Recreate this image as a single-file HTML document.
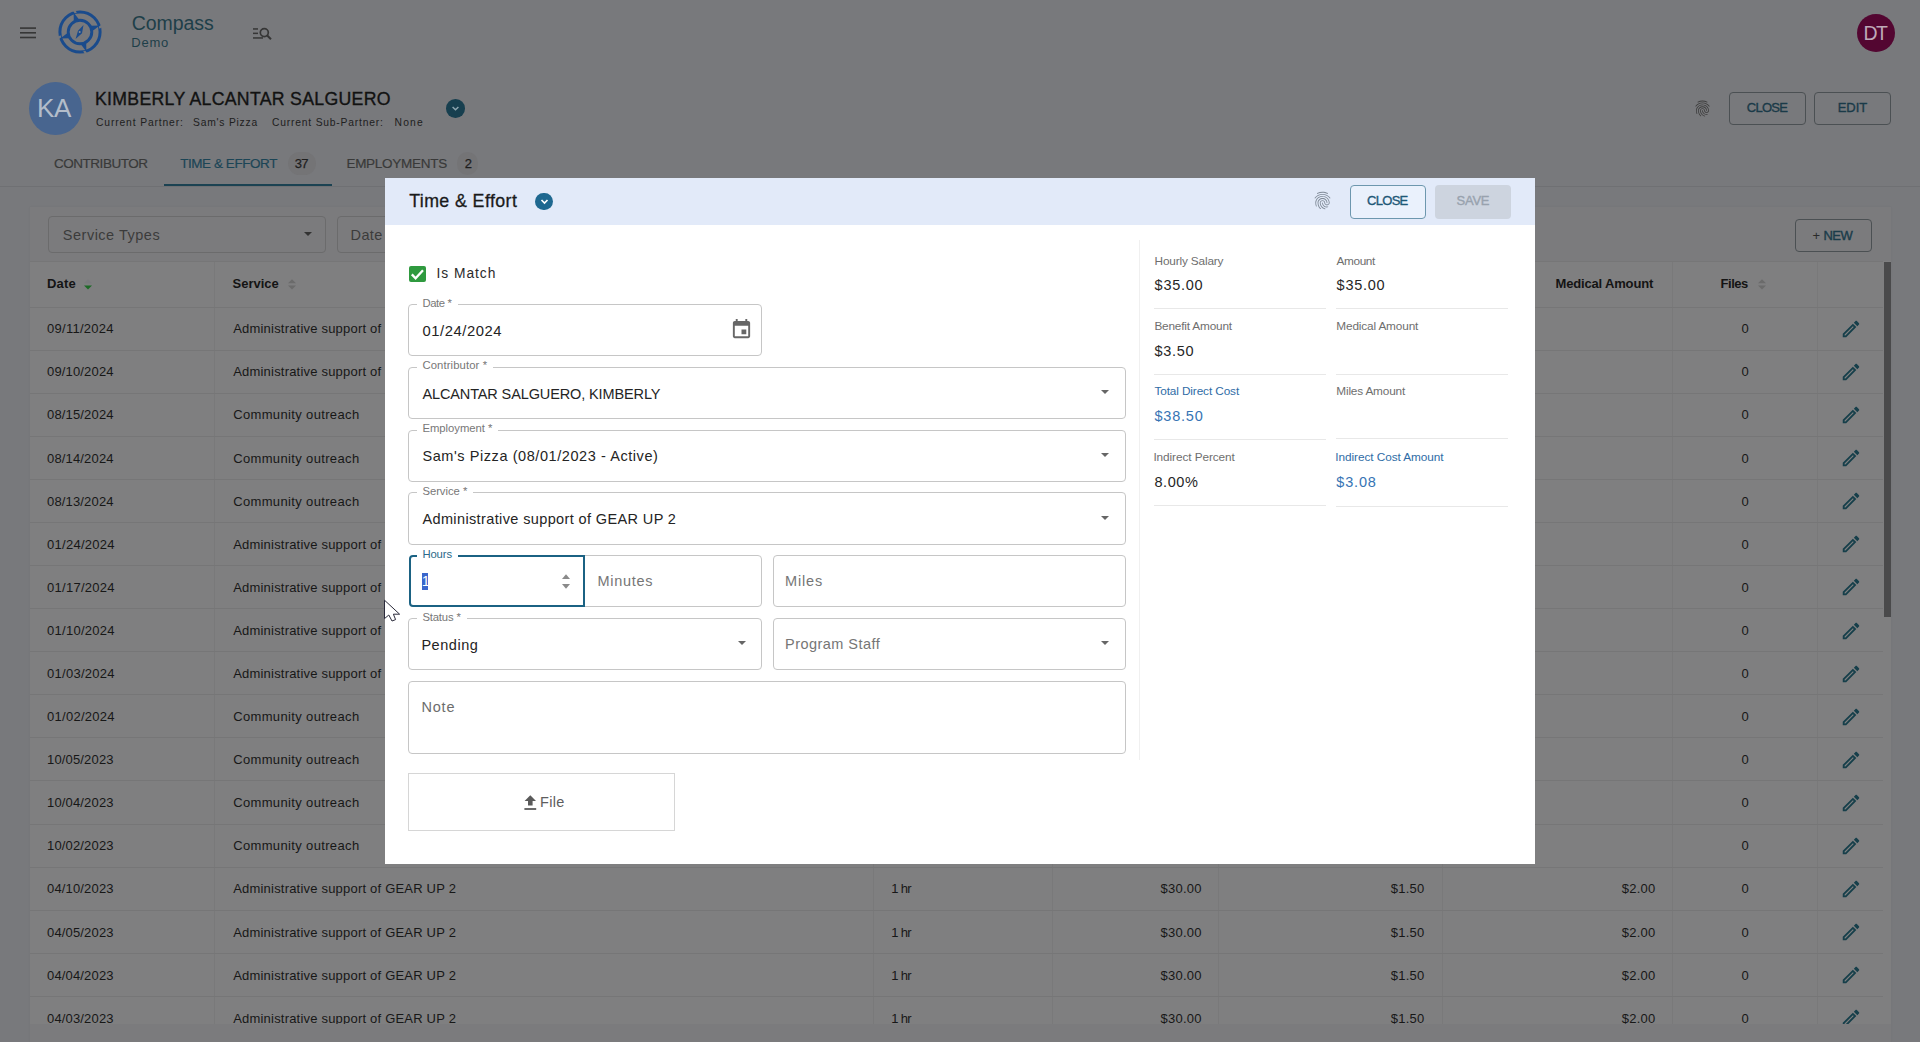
<!DOCTYPE html>
<html><head><meta charset="utf-8">
<style>
*{box-sizing:border-box;margin:0;padding:0}
html,body{width:1920px;height:1042px;overflow:hidden}
body{font-family:"Liberation Sans",sans-serif;background:#78797c;position:relative}
.a{position:absolute;white-space:nowrap}
.t{line-height:1}
</style></head><body>
<div class="a" style="left:30px;top:207px;width:1861px;height:835px;background:#7b7b7d;box-shadow:0 0 2px rgba(0,0,0,0.06)"></div>
<div class="a" style="left:30px;top:261px;width:1861px;height:763px;background:#7f7f80"></div>
<svg class="a" style="left:19px;top:26px" width="18" height="14" viewBox="0 0 18 14"><rect x="1" y="1.3" width="16" height="1.6" fill="#363636"/><rect x="1" y="6" width="16" height="1.6" fill="#363636"/><rect x="1" y="10.7" width="16" height="1.6" fill="#363636"/></svg>
<svg class="a" style="left:57px;top:9px" width="46" height="46" viewBox="-23 -23 46 46">
 <defs><mask id="lm" maskUnits="userSpaceOnUse" x="-23" y="-23" width="46" height="46"><rect x="-23" y="-23" width="46" height="46" fill="#fff"/>
  <g id="gp"><path d="M-5.2,-18.6 L-8.2,-23 L-5.6,-23 L-3.2,-19.6 Z" fill="#000"/></g>
  <use href="#gp" transform="rotate(90)"/><use href="#gp" transform="rotate(180)"/><use href="#gp" transform="rotate(270)"/>
 </mask></defs>
 <circle cx="0" cy="0" r="20.1" fill="none" stroke="#1a4b8c" stroke-width="3" mask="url(#lm)"/>
 <circle cx="0" cy="0" r="11.8" fill="none" stroke="#1a4b8c" stroke-width="2.9"/>
 <g fill="#1a4b8c">
  <path id="bl" d="M-6.4,-19.8 L-6.2,-11 L-1.2,-12.8 Z"/>
  <use href="#bl" transform="rotate(90)"/><use href="#bl" transform="rotate(180)"/><use href="#bl" transform="rotate(270)"/>
  <path d="M3.5,-7 L2,1.2 L-2,-1.2 Z M-4.4,7 L-2,-1.2 L2,1.2 Z"/>
 </g>
 <circle cx="-0.3" cy="0" r="1" fill="#8a8c90"/>
</svg>
<div class="a t" style="left:131.70px;top:14.19px;font-size:19.5px;color:#1e3f49;letter-spacing:-0.052px">Compass</div>
<div class="a t" style="left:131.30px;top:36.10px;font-size:13px;color:#1e3f49;letter-spacing:0.751px">Demo</div>
<svg class="a" style="left:252px;top:26px" width="21" height="15" viewBox="0 0 21 15"><g fill="#363636"><rect x="1" y="2.2" width="5" height="1.5"/><rect x="1" y="6.6" width="5" height="1.5"/><rect x="1" y="11.2" width="10" height="1.5"/></g><circle cx="12.3" cy="6.6" r="4" fill="none" stroke="#363636" stroke-width="1.7"/><path d="M15.2 9.5 L19 13.3" stroke="#363636" stroke-width="2"/></svg>
<div class="a" style="left:1857px;top:13.6px;width:38.3px;height:38.3px;border-radius:50%;background:#530631"></div>
<div class="a t" style="left:1863.50px;top:24.19px;font-size:19.5px;color:#bfa9b8;letter-spacing:-1.582px">DT</div>
<div class="a" style="left:29px;top:82.4px;width:52.8px;height:52.8px;border-radius:50%;background:#48658f"></div>
<div class="a t" style="left:37.10px;top:95.49px;font-size:26px;color:#b3bdca;letter-spacing:-0.342px">KA</div>
<div class="a t" style="left:95.00px;top:90.62px;font-size:17.7px;color:#121212;letter-spacing:0.299px;-webkit-text-stroke:0.35px #121212">KIMBERLY ALCANTAR SALGUERO</div>
<div class="a t" style="left:96.00px;top:118.18px;font-size:10.3px;color:#202020;letter-spacing:0.869px">Current Partner:</div>
<div class="a t" style="left:193.00px;top:118.18px;font-size:10.3px;color:#202020;letter-spacing:0.790px">Sam's Pizza</div>
<div class="a t" style="left:272.00px;top:118.18px;font-size:10.3px;color:#202020;letter-spacing:0.805px">Current Sub-Partner:</div>
<div class="a t" style="left:394.50px;top:118.18px;font-size:10.3px;color:#202020;letter-spacing:1.204px">None</div>
<div class="a" style="left:446.2px;top:99px;width:18.6px;height:18.6px;border-radius:50%;background:#173f4f"></div>
<svg class="a" style="left:450px;top:103px" width="11" height="11" viewBox="0 0 11 11"><path d="M2.6 4 L5.5 6.8 L8.4 4" fill="none" stroke="#8fa6b0" stroke-width="1.5"/></svg>
<svg class="a" style="left:1693px;top:99px" width="19" height="19" viewBox="0 0 24 24"><path fill="#3c3c3c" d="M17.81 4.47c-.08 0-.16-.02-.23-.06C15.66 3.42 14 3 12.01 3c-1.98 0-3.86.47-5.57 1.41-.24.13-.54.04-.68-.2-.13-.24-.04-.55.2-.68C7.82 2.52 9.86 2 12.01 2c2.13 0 3.98.47 6.03 1.52.25.13.34.43.21.67-.09.18-.26.28-.44.28zM3.5 9.72c-.1 0-.2-.03-.29-.09-.23-.16-.28-.47-.12-.7.99-1.4 2.25-2.5 3.750-3.27C9.98 4.04 14 4.03 17.15 5.65c1.5.77 2.76 1.860 3.75 3.250.16.22.11.54-.12.7-.23.16-.54.11-.7-.12-.9-1.26-2.04-2.25-3.39-2.94-2.87-1.47-6.54-1.47-9.4.01-1.36.7-2.5 1.7-3.4 2.96-.08.14-.23.21-.39.21zm6.25 12.07c-.13 0-.26-.05-.35-.15-.87-.87-1.34-1.43-2.01-2.64-.69-1.23-1.05-2.73-1.05-4.34 0-2.97 2.54-5.39 5.66-5.39s5.66 2.42 5.66 5.39c0 .28-.22.5-.5.5s-.5-.22-.5-.5c0-2.420-2.09-4.39-4.66-4.39-2.57 0-4.66 1.97-4.66 4.39 0 1.44.32 2.77.93 3.85.64 1.15 1.08 1.64 1.85 2.42.19.2.19.51 0 .71-.11.1-.24.15-.37.15zm7.17-1.85c-1.19 0-2.24-.3-3.1-.89-1.49-1.01-2.38-2.65-2.38-4.39 0-.28.22-.5.5-.5s.5.22.5.5c0 1.41.72 2.74 1.94 3.56.71.48 1.54.71 2.54.71.24 0 .64-.03 1.04-.1.27-.05.53.13.58.41.05.27-.13.53-.41.58-.57.11-1.07.12-1.210.12zM14.91 22c-.04 0-.09-.01-.13-.02-1.59-.44-2.63-1.030-3.72-2.1-1.4-1.39-2.17-3.24-2.17-5.220 0-1.62 1.38-2.94 3.08-2.94 1.7 0 3.08 1.32 3.08 2.94 0 1.07.93 1.94 2.08 1.94s2.08-.87 2.08-1.94c0-3.77-3.25-6.83-7.25-6.83-2.840 0-5.44 1.58-6.61 4.03-.39.81-.59 1.76-.59 2.8 0 .78.07 2.01.67 3.61.1.26-.03.55-.29.64-.26.1-.55-.04-.64-.29-.49-1.31-.73-2.61-.73-3.96 0-1.2.23-2.29.68-3.24 1.33-2.79 4.28-4.6 7.51-4.6 4.55 0 8.25 3.51 8.25 7.83 0 1.62-1.38 2.94-3.08 2.94s-3.08-1.32-3.08-2.94c0-1.07-.93-1.94-2.08-1.94s-2.08.87-2.08 1.94c0 1.71.66 3.31 1.87 4.51.95.94 1.86 1.46 3.27 1.85.27.07.42.35.35.61-.05.23-.26.38-.47.38z"/></svg>
<div class="a" style="left:1729px;top:92px;width:77px;height:33px;border:1px solid #4b5053;border-radius:4px"></div>
<div class="a t" style="left:1746.80px;top:101.00px;font-size:13px;color:#1a3a48;letter-spacing:-0.725px;-webkit-text-stroke:0.35px #1a3a48">CLOSE</div>
<div class="a" style="left:1814px;top:92px;width:77px;height:33px;border:1px solid #4b5053;border-radius:4px"></div>
<div class="a t" style="left:1837.70px;top:101.00px;font-size:13px;color:#1a3a48;letter-spacing:-0.024px;-webkit-text-stroke:0.35px #1a3a48">EDIT</div>
<div class="a t" style="left:53.90px;top:157.07px;font-size:13.5px;color:#393939;letter-spacing:-0.460px;-webkit-text-stroke:0.2px #393939">CONTRIBUTOR</div>
<div class="a t" style="left:180.20px;top:157.07px;font-size:13.5px;color:#1c4556;letter-spacing:-0.438px;-webkit-text-stroke:0.2px #1c4556">TIME &amp; EFFORT</div>
<div class="a" style="left:288px;top:151.5px;width:27.5px;height:23px;border-radius:12px;background:#747476"></div>
<div class="a t" style="left:294.70px;top:156.80px;font-size:13px;color:#1e1e1e;letter-spacing:-0.630px;-webkit-text-stroke:0.25px #1e1e1e">37</div>
<div class="a t" style="left:346.40px;top:157.07px;font-size:13.5px;color:#393939;letter-spacing:-0.261px;-webkit-text-stroke:0.2px #393939">EMPLOYMENTS</div>
<div class="a" style="left:457px;top:151.5px;width:20.5px;height:23px;border-radius:12px;background:#747476"></div>
<div class="a t" style="left:464.80px;top:156.80px;font-size:13px;color:#1e1e1e;-webkit-text-stroke:0.25px #1e1e1e">2</div>
<div class="a" style="left:0px;top:186px;width:1920px;height:1px;background:#6f7073"></div>
<div class="a" style="left:164px;top:184px;width:168px;height:2px;background:#1b4252"></div>
<div class="a" style="left:48.3px;top:216.4px;width:278px;height:37px;border:1px solid #6b6b6c;border-radius:4px"></div>
<div class="a t" style="left:62.80px;top:228.03px;font-size:14.5px;color:#3b3b3b;letter-spacing:0.507px">Service Types</div>
<div class="a" style="left:303.8px;top:232px;width:0;height:0;border-left:4.0px solid transparent;border-right:4.0px solid transparent;border-top:4.4px solid #333"></div>
<div class="a" style="left:337.4px;top:216.4px;width:220px;height:37px;border:1px solid #6b6b6c;border-radius:4px"></div>
<div class="a t" style="left:350.50px;top:228.03px;font-size:14.5px;color:#3b3b3b;letter-spacing:0.412px">Date</div>
<div class="a" style="left:1795px;top:219px;width:77px;height:33px;border:1px solid #4b5053;border-radius:4px"></div>
<div class="a t" style="left:1812.50px;top:228.70px;font-size:13px;color:#2a2a2a">+</div>
<div class="a t" style="left:1823.50px;top:228.70px;font-size:13px;color:#1a3c4a;letter-spacing:-0.530px;-webkit-text-stroke:0.4px #1a3c4a">NEW</div>
<div class="a" style="left:0;top:0;width:1920px;height:1024px;overflow:hidden">
<div class="a" style="left:30px;top:261px;width:1853px;height:1px;background:#767677"></div>
<div class="a" style="left:214px;top:262px;width:1px;height:762px;background:#79797a"></div>
<div class="a" style="left:873px;top:262px;width:1px;height:762px;background:#79797a"></div>
<div class="a" style="left:1052px;top:262px;width:1px;height:762px;background:#79797a"></div>
<div class="a" style="left:1218px;top:262px;width:1px;height:762px;background:#79797a"></div>
<div class="a" style="left:1442px;top:262px;width:1px;height:762px;background:#79797a"></div>
<div class="a" style="left:1672px;top:262px;width:1px;height:762px;background:#79797a"></div>
<div class="a" style="left:1817px;top:262px;width:1px;height:762px;background:#79797a"></div>
<div class="a t" style="left:47.00px;top:277.30px;font-size:13px;color:#141414;letter-spacing:0.184px;font-weight:700">Date</div>
<svg class="a" style="left:82.6px;top:278px" width="10" height="13" viewBox="0 0 10 13"><path d="M1 5.2 L5 1.2 L9 5.2Z" fill="#7a7a7e"/><path d="M1 7.6 L5 11.6 L9 7.6Z" fill="#1d6a26"/></svg>
<div class="a t" style="left:232.50px;top:277.30px;font-size:13px;color:#141414;letter-spacing:-0.005px;font-weight:700">Service</div>
<svg class="a" style="left:287px;top:278px" width="10" height="13" viewBox="0 0 10 13"><path d="M1 5.2 L5 1.2 L9 5.2Z" fill="#6b6b6b"/><path d="M1 7.6 L5 11.6 L9 7.6Z" fill="#6b6b6b"/></svg>
<div class="a t" style="left:1555.60px;top:277.30px;font-size:13px;color:#141414;letter-spacing:-0.174px;font-weight:700">Medical Amount</div>
<div class="a t" style="left:1720.60px;top:277.30px;font-size:13px;color:#141414;letter-spacing:-0.474px;font-weight:700">Files</div>
<svg class="a" style="left:1756.5px;top:278px" width="10" height="13" viewBox="0 0 10 13"><path d="M1 5.2 L5 1.2 L9 5.2Z" fill="#6b6b6b"/><path d="M1 7.6 L5 11.6 L9 7.6Z" fill="#6b6b6b"/></svg>
<div class="a" style="left:30px;top:307px;width:1853px;height:1px;background:#767677"></div>
<div class="a t" style="left:47.00px;top:322.30px;font-size:13px;color:#171717;letter-spacing:0.270px">09/11/2024</div>
<div class="a t" style="left:233.20px;top:322.30px;font-size:13px;color:#171717;letter-spacing:0.203px">Administrative support of GEAR UP 2</div>
<div class="a t" style="left:1741.60px;top:322.30px;font-size:13px;color:#171717">0</div>
<svg class="a" style="left:1839.6px;top:317.9px" width="22" height="22" viewBox="0 0 24 24"><path fill="#163f4a" d="M3 17.25V21h3.75L17.81 9.94l-3.75-3.75L3 17.25zM5.92 19H5v-.92l9.06-9.06.92.92L5.92 19zM20.71 5.63l-2.34-2.34c-.2-.2-.45-.29-.71-.29s-.51.1-.7.29l-1.83 1.83 3.75 3.75 1.83-1.83c.39-.39.39-1.02 0-1.41z"/></svg>
<div class="a" style="left:30px;top:350px;width:1853px;height:1px;background:#767677"></div>
<div class="a t" style="left:47.00px;top:365.39px;font-size:13px;color:#171717;letter-spacing:0.163px">09/10/2024</div>
<div class="a t" style="left:233.20px;top:365.39px;font-size:13px;color:#171717;letter-spacing:0.203px">Administrative support of GEAR UP 2</div>
<div class="a t" style="left:1741.60px;top:365.39px;font-size:13px;color:#171717">0</div>
<svg class="a" style="left:1839.6px;top:361.0px" width="22" height="22" viewBox="0 0 24 24"><path fill="#163f4a" d="M3 17.25V21h3.75L17.81 9.94l-3.75-3.75L3 17.25zM5.92 19H5v-.92l9.06-9.06.92.92L5.92 19zM20.71 5.63l-2.34-2.34c-.2-.2-.45-.29-.71-.29s-.51.1-.7.29l-1.83 1.83 3.75 3.75 1.83-1.83c.39-.39.39-1.02 0-1.41z"/></svg>
<div class="a" style="left:30px;top:393px;width:1853px;height:1px;background:#767677"></div>
<div class="a t" style="left:47.00px;top:408.48px;font-size:13px;color:#171717;letter-spacing:0.163px">08/15/2024</div>
<div class="a t" style="left:233.20px;top:408.48px;font-size:13px;color:#171717;letter-spacing:0.352px">Community outreach</div>
<div class="a t" style="left:1741.60px;top:408.48px;font-size:13px;color:#171717">0</div>
<svg class="a" style="left:1839.6px;top:404.1px" width="22" height="22" viewBox="0 0 24 24"><path fill="#163f4a" d="M3 17.25V21h3.75L17.81 9.94l-3.75-3.75L3 17.25zM5.92 19H5v-.92l9.06-9.06.92.92L5.92 19zM20.71 5.63l-2.34-2.34c-.2-.2-.45-.29-.71-.29s-.51.1-.7.29l-1.83 1.83 3.75 3.75 1.83-1.83c.39-.39.39-1.02 0-1.41z"/></svg>
<div class="a" style="left:30px;top:436px;width:1853px;height:1px;background:#767677"></div>
<div class="a t" style="left:47.00px;top:451.57px;font-size:13px;color:#171717;letter-spacing:0.163px">08/14/2024</div>
<div class="a t" style="left:233.20px;top:451.57px;font-size:13px;color:#171717;letter-spacing:0.352px">Community outreach</div>
<div class="a t" style="left:1741.60px;top:451.57px;font-size:13px;color:#171717">0</div>
<svg class="a" style="left:1839.6px;top:447.2px" width="22" height="22" viewBox="0 0 24 24"><path fill="#163f4a" d="M3 17.25V21h3.75L17.81 9.94l-3.75-3.75L3 17.25zM5.92 19H5v-.92l9.06-9.06.92.92L5.92 19zM20.71 5.63l-2.34-2.34c-.2-.2-.45-.29-.71-.29s-.51.1-.7.29l-1.83 1.83 3.75 3.75 1.83-1.83c.39-.39.39-1.02 0-1.41z"/></svg>
<div class="a" style="left:30px;top:479px;width:1853px;height:1px;background:#767677"></div>
<div class="a t" style="left:47.00px;top:494.66px;font-size:13px;color:#171717;letter-spacing:0.163px">08/13/2024</div>
<div class="a t" style="left:233.20px;top:494.66px;font-size:13px;color:#171717;letter-spacing:0.352px">Community outreach</div>
<div class="a t" style="left:1741.60px;top:494.66px;font-size:13px;color:#171717">0</div>
<svg class="a" style="left:1839.6px;top:490.3px" width="22" height="22" viewBox="0 0 24 24"><path fill="#163f4a" d="M3 17.25V21h3.75L17.81 9.94l-3.75-3.75L3 17.25zM5.92 19H5v-.92l9.06-9.06.92.92L5.92 19zM20.71 5.63l-2.34-2.34c-.2-.2-.45-.29-.71-.29s-.51.1-.7.29l-1.83 1.83 3.75 3.75 1.83-1.83c.39-.39.39-1.02 0-1.41z"/></svg>
<div class="a" style="left:30px;top:522px;width:1853px;height:1px;background:#767677"></div>
<div class="a t" style="left:47.00px;top:537.75px;font-size:13px;color:#171717;letter-spacing:0.270px">01/24/2024</div>
<div class="a t" style="left:233.20px;top:537.75px;font-size:13px;color:#171717;letter-spacing:0.203px">Administrative support of GEAR UP 2</div>
<div class="a t" style="left:1741.60px;top:537.75px;font-size:13px;color:#171717">0</div>
<svg class="a" style="left:1839.6px;top:533.4px" width="22" height="22" viewBox="0 0 24 24"><path fill="#163f4a" d="M3 17.25V21h3.75L17.81 9.94l-3.75-3.75L3 17.25zM5.92 19H5v-.92l9.06-9.06.92.92L5.92 19zM20.71 5.63l-2.34-2.34c-.2-.2-.45-.29-.71-.29s-.51.1-.7.29l-1.83 1.83 3.75 3.75 1.83-1.83c.39-.39.39-1.02 0-1.41z"/></svg>
<div class="a" style="left:30px;top:565px;width:1853px;height:1px;background:#767677"></div>
<div class="a t" style="left:47.00px;top:580.84px;font-size:13px;color:#171717;letter-spacing:0.270px">01/17/2024</div>
<div class="a t" style="left:233.20px;top:580.84px;font-size:13px;color:#171717;letter-spacing:0.203px">Administrative support of GEAR UP 2</div>
<div class="a t" style="left:1741.60px;top:580.84px;font-size:13px;color:#171717">0</div>
<svg class="a" style="left:1839.6px;top:576.4px" width="22" height="22" viewBox="0 0 24 24"><path fill="#163f4a" d="M3 17.25V21h3.75L17.81 9.94l-3.75-3.75L3 17.25zM5.92 19H5v-.92l9.06-9.06.92.92L5.92 19zM20.71 5.63l-2.34-2.34c-.2-.2-.45-.29-.71-.29s-.51.1-.7.29l-1.83 1.83 3.75 3.75 1.83-1.83c.39-.39.39-1.02 0-1.41z"/></svg>
<div class="a" style="left:30px;top:608px;width:1853px;height:1px;background:#767677"></div>
<div class="a t" style="left:47.00px;top:623.93px;font-size:13px;color:#171717;letter-spacing:0.270px">01/10/2024</div>
<div class="a t" style="left:233.20px;top:623.93px;font-size:13px;color:#171717;letter-spacing:0.203px">Administrative support of GEAR UP 2</div>
<div class="a t" style="left:1741.60px;top:623.93px;font-size:13px;color:#171717">0</div>
<svg class="a" style="left:1839.6px;top:619.5px" width="22" height="22" viewBox="0 0 24 24"><path fill="#163f4a" d="M3 17.25V21h3.75L17.81 9.94l-3.75-3.75L3 17.25zM5.92 19H5v-.92l9.06-9.06.92.92L5.92 19zM20.71 5.63l-2.34-2.34c-.2-.2-.45-.29-.71-.29s-.51.1-.7.29l-1.83 1.83 3.75 3.75 1.83-1.83c.39-.39.39-1.02 0-1.41z"/></svg>
<div class="a" style="left:30px;top:651px;width:1853px;height:1px;background:#767677"></div>
<div class="a t" style="left:47.00px;top:667.02px;font-size:13px;color:#171717;letter-spacing:0.270px">01/03/2024</div>
<div class="a t" style="left:233.20px;top:667.02px;font-size:13px;color:#171717;letter-spacing:0.203px">Administrative support of GEAR UP 2</div>
<div class="a t" style="left:1741.60px;top:667.02px;font-size:13px;color:#171717">0</div>
<svg class="a" style="left:1839.6px;top:662.6px" width="22" height="22" viewBox="0 0 24 24"><path fill="#163f4a" d="M3 17.25V21h3.75L17.81 9.94l-3.75-3.75L3 17.25zM5.92 19H5v-.92l9.06-9.06.92.92L5.92 19zM20.71 5.63l-2.34-2.34c-.2-.2-.45-.29-.71-.29s-.51.1-.7.29l-1.83 1.83 3.75 3.75 1.83-1.83c.39-.39.39-1.02 0-1.41z"/></svg>
<div class="a" style="left:30px;top:694px;width:1853px;height:1px;background:#767677"></div>
<div class="a t" style="left:47.00px;top:710.11px;font-size:13px;color:#171717;letter-spacing:0.270px">01/02/2024</div>
<div class="a t" style="left:233.20px;top:710.11px;font-size:13px;color:#171717;letter-spacing:0.352px">Community outreach</div>
<div class="a t" style="left:1741.60px;top:710.11px;font-size:13px;color:#171717">0</div>
<svg class="a" style="left:1839.6px;top:705.7px" width="22" height="22" viewBox="0 0 24 24"><path fill="#163f4a" d="M3 17.25V21h3.75L17.81 9.94l-3.75-3.75L3 17.25zM5.92 19H5v-.92l9.06-9.06.92.92L5.92 19zM20.71 5.63l-2.34-2.34c-.2-.2-.45-.29-.71-.29s-.51.1-.7.29l-1.83 1.83 3.75 3.75 1.83-1.83c.39-.39.39-1.02 0-1.41z"/></svg>
<div class="a" style="left:30px;top:737px;width:1853px;height:1px;background:#767677"></div>
<div class="a t" style="left:47.00px;top:753.20px;font-size:13px;color:#171717;letter-spacing:0.163px">10/05/2023</div>
<div class="a t" style="left:233.20px;top:753.20px;font-size:13px;color:#171717;letter-spacing:0.352px">Community outreach</div>
<div class="a t" style="left:1741.60px;top:753.20px;font-size:13px;color:#171717">0</div>
<svg class="a" style="left:1839.6px;top:748.8px" width="22" height="22" viewBox="0 0 24 24"><path fill="#163f4a" d="M3 17.25V21h3.75L17.81 9.94l-3.75-3.75L3 17.25zM5.92 19H5v-.92l9.06-9.06.92.92L5.92 19zM20.71 5.63l-2.34-2.34c-.2-.2-.45-.29-.71-.29s-.51.1-.7.29l-1.83 1.83 3.75 3.75 1.83-1.83c.39-.39.39-1.02 0-1.41z"/></svg>
<div class="a" style="left:30px;top:780px;width:1853px;height:1px;background:#767677"></div>
<div class="a t" style="left:47.00px;top:796.29px;font-size:13px;color:#171717;letter-spacing:0.163px">10/04/2023</div>
<div class="a t" style="left:233.20px;top:796.29px;font-size:13px;color:#171717;letter-spacing:0.352px">Community outreach</div>
<div class="a t" style="left:1741.60px;top:796.29px;font-size:13px;color:#171717">0</div>
<svg class="a" style="left:1839.6px;top:791.9px" width="22" height="22" viewBox="0 0 24 24"><path fill="#163f4a" d="M3 17.25V21h3.75L17.81 9.94l-3.75-3.75L3 17.25zM5.92 19H5v-.92l9.06-9.06.92.92L5.92 19zM20.71 5.63l-2.34-2.34c-.2-.2-.45-.29-.71-.29s-.51.1-.7.29l-1.83 1.83 3.75 3.75 1.83-1.83c.39-.39.39-1.02 0-1.41z"/></svg>
<div class="a" style="left:30px;top:824px;width:1853px;height:1px;background:#767677"></div>
<div class="a t" style="left:47.00px;top:839.38px;font-size:13px;color:#171717;letter-spacing:0.163px">10/02/2023</div>
<div class="a t" style="left:233.20px;top:839.38px;font-size:13px;color:#171717;letter-spacing:0.352px">Community outreach</div>
<div class="a t" style="left:1741.60px;top:839.38px;font-size:13px;color:#171717">0</div>
<svg class="a" style="left:1839.6px;top:835.0px" width="22" height="22" viewBox="0 0 24 24"><path fill="#163f4a" d="M3 17.25V21h3.75L17.81 9.94l-3.75-3.75L3 17.25zM5.92 19H5v-.92l9.06-9.06.92.92L5.92 19zM20.71 5.63l-2.34-2.34c-.2-.2-.45-.29-.71-.29s-.51.1-.7.29l-1.83 1.83 3.75 3.75 1.83-1.83c.39-.39.39-1.02 0-1.41z"/></svg>
<div class="a" style="left:30px;top:867px;width:1853px;height:1px;background:#767677"></div>
<div class="a t" style="left:47.00px;top:882.47px;font-size:13px;color:#171717;letter-spacing:0.163px">04/10/2023</div>
<div class="a t" style="left:233.20px;top:882.47px;font-size:13px;color:#171717;letter-spacing:0.203px">Administrative support of GEAR UP 2</div>
<div class="a t" style="left:891.25px;top:882.47px;font-size:13px;color:#171717;letter-spacing:-0.691px">1 hr</div>
<div class="a t" style="left:1160.47px;top:882.47px;font-size:13px;color:#171717;letter-spacing:0.250px">$30.00</div>
<div class="a t" style="left:1390.70px;top:882.47px;font-size:13px;color:#171717;letter-spacing:0.250px">$1.50</div>
<div class="a t" style="left:1621.70px;top:882.47px;font-size:13px;color:#171717;letter-spacing:0.250px">$2.00</div>
<div class="a t" style="left:1741.60px;top:882.47px;font-size:13px;color:#171717">0</div>
<svg class="a" style="left:1839.6px;top:878.1px" width="22" height="22" viewBox="0 0 24 24"><path fill="#163f4a" d="M3 17.25V21h3.75L17.81 9.94l-3.75-3.75L3 17.25zM5.92 19H5v-.92l9.06-9.06.92.92L5.92 19zM20.71 5.63l-2.34-2.34c-.2-.2-.45-.29-.71-.29s-.51.1-.7.29l-1.83 1.83 3.75 3.75 1.83-1.83c.39-.39.39-1.02 0-1.41z"/></svg>
<div class="a" style="left:30px;top:910px;width:1853px;height:1px;background:#767677"></div>
<div class="a t" style="left:47.00px;top:925.56px;font-size:13px;color:#171717;letter-spacing:0.163px">04/05/2023</div>
<div class="a t" style="left:233.20px;top:925.56px;font-size:13px;color:#171717;letter-spacing:0.203px">Administrative support of GEAR UP 2</div>
<div class="a t" style="left:891.25px;top:925.56px;font-size:13px;color:#171717;letter-spacing:-0.691px">1 hr</div>
<div class="a t" style="left:1160.47px;top:925.56px;font-size:13px;color:#171717;letter-spacing:0.250px">$30.00</div>
<div class="a t" style="left:1390.70px;top:925.56px;font-size:13px;color:#171717;letter-spacing:0.250px">$1.50</div>
<div class="a t" style="left:1621.70px;top:925.56px;font-size:13px;color:#171717;letter-spacing:0.250px">$2.00</div>
<div class="a t" style="left:1741.60px;top:925.56px;font-size:13px;color:#171717">0</div>
<svg class="a" style="left:1839.6px;top:921.2px" width="22" height="22" viewBox="0 0 24 24"><path fill="#163f4a" d="M3 17.25V21h3.75L17.81 9.94l-3.75-3.75L3 17.25zM5.92 19H5v-.92l9.06-9.06.92.92L5.92 19zM20.71 5.63l-2.34-2.34c-.2-.2-.45-.29-.71-.29s-.51.1-.7.29l-1.83 1.83 3.75 3.75 1.83-1.83c.39-.39.39-1.02 0-1.41z"/></svg>
<div class="a" style="left:30px;top:953px;width:1853px;height:1px;background:#767677"></div>
<div class="a t" style="left:47.00px;top:968.65px;font-size:13px;color:#171717;letter-spacing:0.163px">04/04/2023</div>
<div class="a t" style="left:233.20px;top:968.65px;font-size:13px;color:#171717;letter-spacing:0.203px">Administrative support of GEAR UP 2</div>
<div class="a t" style="left:891.25px;top:968.65px;font-size:13px;color:#171717;letter-spacing:-0.691px">1 hr</div>
<div class="a t" style="left:1160.47px;top:968.65px;font-size:13px;color:#171717;letter-spacing:0.250px">$30.00</div>
<div class="a t" style="left:1390.70px;top:968.65px;font-size:13px;color:#171717;letter-spacing:0.250px">$1.50</div>
<div class="a t" style="left:1621.70px;top:968.65px;font-size:13px;color:#171717;letter-spacing:0.250px">$2.00</div>
<div class="a t" style="left:1741.60px;top:968.65px;font-size:13px;color:#171717">0</div>
<svg class="a" style="left:1839.6px;top:964.2px" width="22" height="22" viewBox="0 0 24 24"><path fill="#163f4a" d="M3 17.25V21h3.75L17.81 9.94l-3.75-3.75L3 17.25zM5.92 19H5v-.92l9.06-9.06.92.92L5.92 19zM20.71 5.63l-2.34-2.34c-.2-.2-.45-.29-.71-.29s-.51.1-.7.29l-1.83 1.83 3.75 3.75 1.83-1.83c.39-.39.39-1.02 0-1.41z"/></svg>
<div class="a" style="left:30px;top:996px;width:1853px;height:1px;background:#767677"></div>
<div class="a t" style="left:47.00px;top:1011.74px;font-size:13px;color:#171717;letter-spacing:0.163px">04/03/2023</div>
<div class="a t" style="left:233.20px;top:1011.74px;font-size:13px;color:#171717;letter-spacing:0.203px">Administrative support of GEAR UP 2</div>
<div class="a t" style="left:891.25px;top:1011.74px;font-size:13px;color:#171717;letter-spacing:-0.691px">1 hr</div>
<div class="a t" style="left:1160.47px;top:1011.74px;font-size:13px;color:#171717;letter-spacing:0.250px">$30.00</div>
<div class="a t" style="left:1390.70px;top:1011.74px;font-size:13px;color:#171717;letter-spacing:0.250px">$1.50</div>
<div class="a t" style="left:1621.70px;top:1011.74px;font-size:13px;color:#171717;letter-spacing:0.250px">$2.00</div>
<div class="a t" style="left:1741.60px;top:1011.74px;font-size:13px;color:#171717">0</div>
<svg class="a" style="left:1839.6px;top:1007.3px" width="22" height="22" viewBox="0 0 24 24"><path fill="#163f4a" d="M3 17.25V21h3.75L17.81 9.94l-3.75-3.75L3 17.25zM5.92 19H5v-.92l9.06-9.06.92.92L5.92 19zM20.71 5.63l-2.34-2.34c-.2-.2-.45-.29-.71-.29s-.51.1-.7.29l-1.83 1.83 3.75 3.75 1.83-1.83c.39-.39.39-1.02 0-1.41z"/></svg>
</div>
<div class="a" style="left:1883.5px;top:262px;width:7.5px;height:355px;background:#4a4a4b"></div>
<div class="a" style="left:385px;top:178px;width:1150px;height:686px;background:#fff"></div>
<div class="a" style="left:385px;top:178px;width:1150px;height:47px;background:#e2eaf9"></div>
<div class="a t" style="left:409.20px;top:193.13px;font-size:17.8px;color:#1a1a1a;letter-spacing:0.406px;-webkit-text-stroke:0.3px #1a1a1a">Time &amp; Effort</div>
<div class="a" style="left:535.4px;top:192.5px;width:17.6px;height:17.6px;border-radius:50%;background:#1e6890"></div>
<svg class="a" style="left:539px;top:196px" width="11" height="11" viewBox="0 0 11 11"><path d="M2.5 4 L5.5 7 L8.5 4" fill="none" stroke="#fff" stroke-width="1.7"/></svg>
<svg class="a" style="left:1311.7px;top:190.3px" width="21" height="21" viewBox="0 0 24 24"><path fill="#7f8a97" d="M17.81 4.47c-.08 0-.16-.02-.23-.06C15.66 3.42 14 3 12.01 3c-1.98 0-3.86.47-5.57 1.41-.24.13-.54.04-.68-.2-.13-.24-.04-.55.2-.68C7.82 2.52 9.86 2 12.01 2c2.13 0 3.98.47 6.03 1.52.25.13.34.43.21.67-.09.18-.26.28-.44.28zM3.5 9.72c-.1 0-.2-.03-.29-.09-.23-.16-.28-.47-.12-.7.99-1.4 2.25-2.5 3.750-3.27C9.98 4.04 14 4.03 17.15 5.65c1.5.77 2.76 1.860 3.75 3.250.16.22.11.54-.12.7-.23.16-.54.11-.7-.12-.9-1.26-2.04-2.25-3.39-2.94-2.87-1.47-6.54-1.47-9.4.01-1.36.7-2.5 1.7-3.4 2.96-.08.14-.23.21-.39.21zm6.25 12.07c-.13 0-.26-.05-.35-.15-.87-.87-1.34-1.43-2.01-2.64-.69-1.23-1.05-2.73-1.05-4.34 0-2.97 2.54-5.39 5.66-5.39s5.66 2.42 5.66 5.39c0 .28-.22.5-.5.5s-.5-.22-.5-.5c0-2.420-2.09-4.39-4.66-4.39-2.57 0-4.66 1.97-4.66 4.39 0 1.44.32 2.77.93 3.85.64 1.15 1.08 1.64 1.85 2.42.19.2.19.51 0 .71-.11.1-.24.15-.37.15zm7.17-1.85c-1.19 0-2.24-.3-3.1-.89-1.49-1.01-2.38-2.65-2.38-4.39 0-.28.22-.5.5-.5s.5.22.5.5c0 1.41.72 2.74 1.94 3.56.71.48 1.54.71 2.54.71.24 0 .64-.03 1.04-.1.27-.05.53.13.58.41.05.27-.13.53-.41.58-.57.11-1.07.12-1.210.12zM14.91 22c-.04 0-.09-.01-.13-.02-1.59-.44-2.63-1.030-3.72-2.1-1.4-1.39-2.17-3.24-2.17-5.220 0-1.62 1.38-2.94 3.08-2.94 1.7 0 3.08 1.32 3.08 2.94 0 1.07.93 1.94 2.08 1.94s2.08-.87 2.08-1.94c0-3.77-3.25-6.83-7.25-6.83-2.840 0-5.44 1.58-6.61 4.03-.39.81-.59 1.76-.59 2.8 0 .78.07 2.01.67 3.61.1.26-.03.55-.29.64-.26.1-.55-.04-.64-.29-.49-1.31-.73-2.61-.73-3.96 0-1.2.23-2.29.68-3.24 1.33-2.79 4.28-4.6 7.51-4.6 4.55 0 8.25 3.51 8.25 7.83 0 1.62-1.38 2.94-3.08 2.94s-3.08-1.32-3.08-2.94c0-1.07-.93-1.94-2.08-1.94s-2.08.87-2.08 1.94c0 1.71.66 3.31 1.87 4.51.95.94 1.86 1.46 3.27 1.85.27.07.42.35.35.61-.05.23-.26.38-.47.38z"/></svg>
<div class="a" style="left:1350.4px;top:185.1px;width:75.6px;height:33.7px;border:1px solid #6d97ae;border-radius:4px;background:#eaf1fc"></div>
<div class="a t" style="left:1367.00px;top:194.10px;font-size:13px;color:#1e5877;letter-spacing:-0.700px;-webkit-text-stroke:0.35px #1e5877">CLOSE</div>
<div class="a" style="left:1435.4px;top:185.1px;width:76px;height:33.7px;border-radius:4px;background:#cdd4df"></div>
<div class="a t" style="left:1456.60px;top:194.10px;font-size:13px;color:#98a2ae;letter-spacing:-0.283px;-webkit-text-stroke:0.35px #98a2ae">SAVE</div>
<div class="a" style="left:1139.3px;top:240px;width:1px;height:520px;background:#f0f0f0"></div>
<div class="a" style="left:409.2px;top:265.7px;width:16.8px;height:16.4px;border-radius:2px;background:#2f9a3f"></div>
<svg class="a" style="left:409.2px;top:265.7px" width="17" height="17" viewBox="0 0 17 17"><path d="M2.8 8.4 L6.6 12.3 L14 4.2" fill="none" stroke="#fff" stroke-width="2.3"/></svg>
<div class="a t" style="left:436.50px;top:266.72px;font-size:13.8px;color:#2b2b2b;letter-spacing:0.962px">Is Match</div>
<div class="a" style="left:408px;top:304px;width:354px;height:52px;border:1px solid #c6c6c6;border-radius:4px;background:#fff"></div>
<div class="a" style="left:416.5px;top:302px;width:41px;height:4px;background:#fff"></div>
<div class="a t" style="left:422.40px;top:297.83px;font-size:11.3px;color:#777;letter-spacing:-0.400px">Date *</div>
<div class="a t" style="left:422.40px;top:323.57px;font-size:14.8px;color:#242424;letter-spacing:0.564px">01/24/2024</div>
<svg class="a" style="left:730px;top:317.5px" width="23" height="23" viewBox="0 0 24 24"><path fill="#676767" d="M17 12h-5v5h5v-5zM16 1v2H8V1H6v2H5c-1.11 0-1.99.9-1.99 2L3 19c0 1.1.89 2 2 2h14c1.1 0 2-.9 2-2V5c0-1.1-.9-2-2-2h-1V1h-2zm3 18H5V8h14v11z"/></svg>
<div class="a" style="left:408px;top:367px;width:717.5px;height:51.5px;border:1px solid #c6c6c6;border-radius:4px;background:#fff"></div>
<div class="a" style="left:416.5px;top:365px;width:76px;height:4px;background:#fff"></div>
<div class="a t" style="left:422.40px;top:360.43px;font-size:11.3px;color:#777;letter-spacing:0.107px">Contributor *</div>
<div class="a t" style="left:422.40px;top:386.73px;font-size:14.5px;color:#242424;letter-spacing:-0.120px">ALCANTAR SALGUERO, KIMBERLY</div>
<div class="a" style="left:1101.3px;top:390px;width:0;height:0;border-left:4.8px solid transparent;border-right:4.8px solid transparent;border-top:4.6px solid #666"></div>
<div class="a" style="left:408px;top:430px;width:717.5px;height:51.5px;border:1px solid #c6c6c6;border-radius:4px;background:#fff"></div>
<div class="a" style="left:416.5px;top:428px;width:81.5px;height:4px;background:#fff"></div>
<div class="a t" style="left:422.40px;top:423.13px;font-size:11.3px;color:#777;letter-spacing:-0.029px">Employment *</div>
<div class="a t" style="left:422.40px;top:448.53px;font-size:14.5px;color:#242424;letter-spacing:0.574px">Sam's Pizza (08/01/2023 - Active)</div>
<div class="a" style="left:1101.3px;top:453px;width:0;height:0;border-left:4.8px solid transparent;border-right:4.8px solid transparent;border-top:4.6px solid #666"></div>
<div class="a" style="left:408px;top:492px;width:717.5px;height:52.5px;border:1px solid #c6c6c6;border-radius:4px;background:#fff"></div>
<div class="a" style="left:416.5px;top:490px;width:56px;height:4px;background:#fff"></div>
<div class="a t" style="left:422.40px;top:485.83px;font-size:11.3px;color:#777;letter-spacing:-0.038px">Service *</div>
<div class="a t" style="left:422.40px;top:511.83px;font-size:14.5px;color:#242424;letter-spacing:0.377px">Administrative support of GEAR UP 2</div>
<div class="a" style="left:1101.3px;top:516px;width:0;height:0;border-left:4.8px solid transparent;border-right:4.8px solid transparent;border-top:4.6px solid #666"></div>
<div class="a" style="left:584px;top:555px;width:177.8px;height:52px;border:1px solid #c6c6c6;border-radius:0 4px 4px 0;background:#fff"></div>
<div class="a" style="left:408.5px;top:555px;width:176.5px;height:52px;border:2px solid #1b6283;border-radius:4px 0 0 4px;background:#fff"></div>
<div class="a" style="left:417.0px;top:553px;width:41.2px;height:4px;background:#fff"></div>
<div class="a t" style="left:422.40px;top:548.83px;font-size:11.3px;color:#2b6a8a;letter-spacing:-0.121px">Hours</div>
<div class="a" style="left:422px;top:573px;width:6.3px;height:17px;background:#3a66cc"></div>
<div class="a t" style="left:421.80px;top:574.23px;font-size:14.5px;color:#ffffff">1</div>
<svg class="a" style="left:560.5px;top:573px" width="10" height="17" viewBox="0 0 10 17"><path d="M1 6 L5 1.2 L9 6Z" fill="#8a8a8a"/><path d="M1 11 L5 15.8 L9 11Z" fill="#8a8a8a"/></svg>
<div class="a t" style="left:597.50px;top:574.23px;font-size:14.5px;color:#767676;letter-spacing:0.713px">Minutes</div>
<div class="a" style="left:773px;top:555px;width:352.5px;height:52px;border:1px solid #c6c6c6;border-radius:4px;background:#fff"></div>
<div class="a t" style="left:785.10px;top:574.23px;font-size:14.5px;color:#767676;letter-spacing:0.829px">Miles</div>
<div class="a" style="left:408px;top:618px;width:354px;height:51.5px;border:1px solid #c6c6c6;border-radius:4px;background:#fff"></div>
<div class="a" style="left:416.5px;top:616px;width:50.5px;height:4px;background:#fff"></div>
<div class="a t" style="left:422.40px;top:611.53px;font-size:11.3px;color:#777;letter-spacing:-0.166px">Status *</div>
<div class="a t" style="left:421.40px;top:637.73px;font-size:14.5px;color:#242424;letter-spacing:0.542px">Pending</div>
<div class="a" style="left:737.8000000000001px;top:641.3px;width:0;height:0;border-left:4.8px solid transparent;border-right:4.8px solid transparent;border-top:4.6px solid #666"></div>
<div class="a" style="left:773px;top:618px;width:352.5px;height:51.5px;border:1px solid #c6c6c6;border-radius:4px;background:#fff"></div>
<div class="a t" style="left:785.10px;top:637.23px;font-size:14.5px;color:#767676;letter-spacing:0.453px">Program Staff</div>
<div class="a" style="left:1101.3px;top:641px;width:0;height:0;border-left:4.8px solid transparent;border-right:4.8px solid transparent;border-top:4.6px solid #666"></div>
<div class="a" style="left:408px;top:681px;width:717.5px;height:72.5px;border:1px solid #c6c6c6;border-radius:4px;background:#fff"></div>
<div class="a t" style="left:421.40px;top:699.93px;font-size:14.5px;color:#6c6c6c;letter-spacing:0.812px">Note</div>
<div class="a" style="left:408.3px;top:773.3px;width:267.2px;height:58px;border:1px solid #d6d6d6;background:#fff"></div>
<svg class="a" style="left:523.5px;top:794.5px" width="13" height="15.5" viewBox="0 0 13 15.5"><path d="M6.3 0.3 L12 6 L8.6 6 L8.6 10.6 L4 10.6 L4 6 L0.6 6 Z" fill="#5a5a5a"/><rect x="0.4" y="13.1" width="11.8" height="1.8" fill="#5a5a5a"/></svg>
<div class="a t" style="left:540.10px;top:794.93px;font-size:14.5px;color:#5e5e5e;letter-spacing:0.300px">File</div>
<div class="a t" style="left:1154.60px;top:255.71px;font-size:11.8px;color:#6e6e6e;letter-spacing:-0.159px">Hourly Salary</div>
<div class="a t" style="left:1154.60px;top:278.23px;font-size:14.5px;color:#262626;letter-spacing:0.743px">$35.00</div>
<div class="a t" style="left:1336.60px;top:255.71px;font-size:11.8px;color:#6e6e6e;letter-spacing:-0.396px">Amount</div>
<div class="a t" style="left:1336.60px;top:278.23px;font-size:14.5px;color:#262626;letter-spacing:0.743px">$35.00</div>
<div class="a" style="left:1154.4px;top:308px;width:171.4px;height:1px;background:#e8e8e8"></div>
<div class="a" style="left:1336.3px;top:308px;width:172.1px;height:1px;background:#e8e8e8"></div>
<div class="a t" style="left:1154.40px;top:320.81px;font-size:11.8px;color:#6e6e6e;letter-spacing:-0.176px">Benefit Amount</div>
<div class="a t" style="left:1154.40px;top:343.83px;font-size:14.5px;color:#262626;letter-spacing:0.695px">$3.50</div>
<div class="a t" style="left:1336.30px;top:320.81px;font-size:11.8px;color:#6e6e6e;letter-spacing:-0.147px">Medical Amount</div>
<div class="a" style="left:1154.4px;top:374px;width:171.4px;height:1px;background:#e8e8e8"></div>
<div class="a" style="left:1336.3px;top:374px;width:172.1px;height:1px;background:#e8e8e8"></div>
<div class="a t" style="left:1154.40px;top:385.61px;font-size:11.8px;color:#2f6ca6;letter-spacing:-0.110px">Total Direct Cost</div>
<div class="a t" style="left:1154.40px;top:409.33px;font-size:14.5px;color:#3674b4;letter-spacing:0.803px">$38.50</div>
<div class="a t" style="left:1336.30px;top:385.61px;font-size:11.8px;color:#6e6e6e;letter-spacing:-0.171px">Miles Amount</div>
<div class="a" style="left:1154.4px;top:439px;width:171.4px;height:1px;background:#e8e8e8"></div>
<div class="a" style="left:1336.3px;top:438.3px;width:172.1px;height:1px;background:#e8e8e8"></div>
<div class="a t" style="left:1153.40px;top:451.71px;font-size:11.8px;color:#6e6e6e;letter-spacing:-0.076px">Indirect Percent</div>
<div class="a t" style="left:1154.40px;top:474.73px;font-size:14.5px;color:#262626;letter-spacing:0.595px">8.00%</div>
<div class="a t" style="left:1335.30px;top:451.71px;font-size:11.8px;color:#2f6ca6;letter-spacing:-0.062px">Indirect Cost Amount</div>
<div class="a t" style="left:1336.30px;top:475.43px;font-size:14.5px;color:#3674b4;letter-spacing:0.820px">$3.08</div>
<div class="a" style="left:1154.4px;top:504.8px;width:171.4px;height:1px;background:#e8e8e8"></div>
<div class="a" style="left:1336.3px;top:505.5px;width:172.1px;height:1px;background:#e8e8e8"></div>
<svg class="a" style="left:383px;top:598px" width="20" height="26" viewBox="0 0 20 26"><path d="M1.5 2.2 L1.5 20.6 L5.8 17 L9 23 L12.6 21.6 L10.4 16.2 L16.6 16.2 Z" fill="#fff" stroke="#2a2a3a" stroke-width="1" stroke-linejoin="miter"/></svg>
</body></html>
